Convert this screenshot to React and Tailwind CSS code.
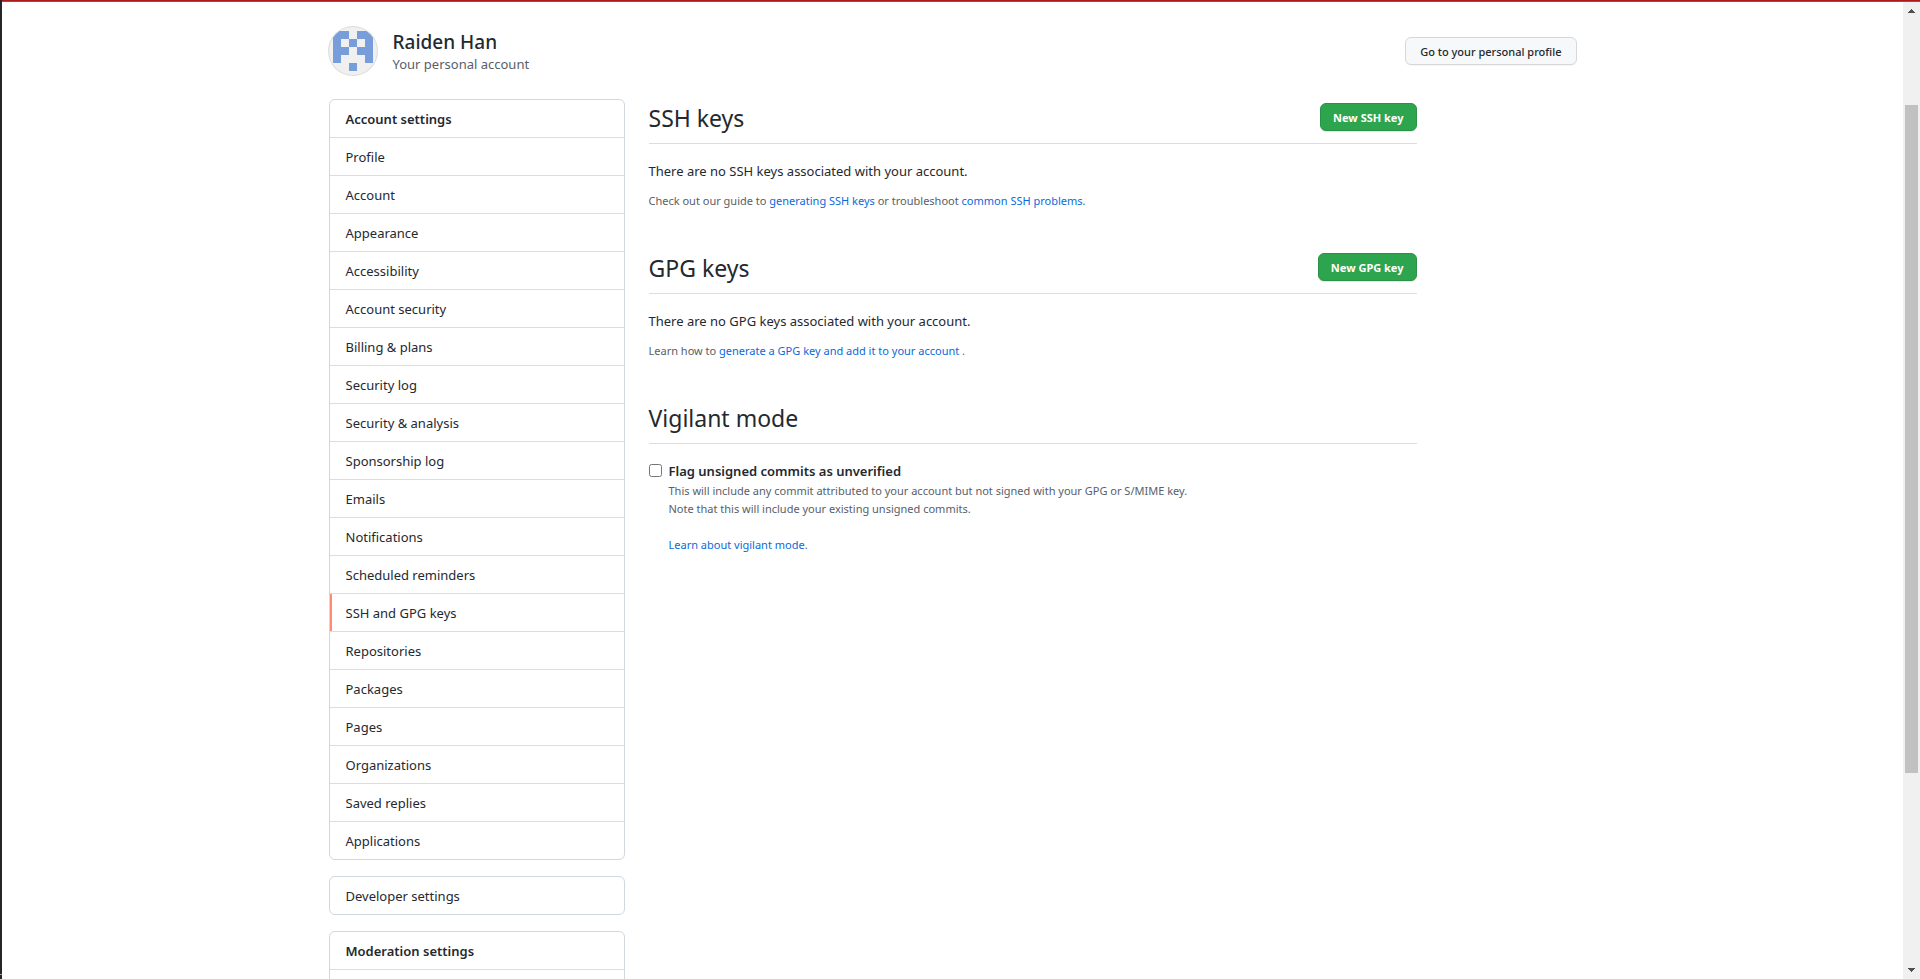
import React from "react";

const ACCOUNT_LINKS = [
  "Profile",
  "Account",
  "Appearance",
  "Accessibility",
  "Account security",
  "Billing & plans",
  "Security log",
  "Security & analysis",
  "Sponsorship log",
  "Emails",
  "Notifications",
  "Scheduled reminders",
  "SSH and GPG keys",
  "Repositories",
  "Packages",
  "Pages",
  "Organizations",
  "Saved replies",
  "Applications",
];

function Avatar() {
  return (
    <svg viewBox="0 0 50 50" className="-mx-px size-[50px] shrink-0" role="img" aria-label="Raiden Han">
      <defs>
        <clipPath id="avatar-circle">
          <circle cx="25" cy="25" r="24" />
        </clipPath>
      </defs>
      <circle cx="25" cy="25" r="25" fill="#dcdcdc" />
      <g clipPath="url(#avatar-circle)">
        <rect width="50" height="50" fill="#f0f0f0" />
        <g fill="#779ddb">
          <path d="M5 5h16v8h-8v8h8v8h-8v8H5z" />
          <path d="M45 5H29v8h8v8h-8v8h8v8h8z" />
          <rect x="21" y="13" width="8" height="8" />
          <rect x="21" y="37" width="8" height="8" />
        </g>
      </g>
    </svg>
  );
}

function Menu({ title, items = [], current, children }) {
  return (
    <nav
      aria-label={title || items[0]}
      className="divide-y divide-[#d8dee4] rounded-md border border-[#d0d7de] leading-[21px]"
    >
      {title && <h2 className="px-4 pt-[9px] pb-[7px] font-semibold">{title}</h2>}
      {items.map((item) => (
        <a
          key={item}
          href="#"
          aria-current={item === current ? "page" : undefined}
          className="block px-4 pt-[9px] pb-[7px] aria-[current=page]:shadow-[inset_2px_0_0_#fd8c73]"
        >
          {item}
        </a>
      ))}
      {children}
    </nav>
  );
}

function Section({ title, action, children }) {
  return (
    <section>
      <div className="flex items-start justify-between border-b border-[#d8dee4] pb-[7px]">
        <h2 className="pt-px text-[23px] leading-9">{title}</h2>
        {action && (
          <button
            type="button"
            className="mt-1 h-7 rounded-md border border-[#2a9147] bg-[#2da44e] px-3 pt-px text-[11px] leading-5 font-bold text-white shadow-[0_1px_0_rgba(27,31,36,0.1)]"
          >
            {action}
          </button>
        )}
      </div>
      <div className="pt-[17px]">{children}</div>
    </section>
  );
}

function Link({ children }) {
  return (
    <a href="#" className="text-[#0969da] hover:underline">
      {children}
    </a>
  );
}

function Scrollbar() {
  return (
    <div aria-hidden="true" className="flex w-[17px] shrink-0 flex-col items-center bg-[#f0f0f0]">
      <svg viewBox="0 0 17 17" className="size-[17px] shrink-0" fill="#505050" shapeRendering="crispEdges">
        <path d="M8 7h1v1h1v1h1v1h1v1H5v-1h1V9h1V8h1z" />
      </svg>
      <div className="flex w-full grow flex-col items-center">
        <div className="grow-[86]" />
        <div className="w-[13px] grow-[668] bg-[#c1c1c1]" />
        <div className="grow-[189]" />
      </div>
      <svg viewBox="0 0 17 17" className="size-[17px] shrink-0" fill="#505050" shapeRendering="crispEdges">
        <path d="M5 6h7v1h-1v1h-1v1H9v1H8V9H7V8H6V7H5z" />
      </svg>
    </div>
  );
}

export default function App() {
  return (
    <div className="flex h-screen overflow-hidden bg-white font-['Noto_Sans','Open_Sans',sans-serif] text-[13px] leading-[21px] text-[#24292f]">
      <div className="flex w-[2px] shrink-0 flex-col justify-end bg-[#252628] pb-1">
        <div className="h-px bg-[#a0a0a0]" />
      </div>
      <div className="flex min-w-0 grow flex-col">
        <div className="h-[2px] shrink-0 border-b border-[#c4383b] bg-[#ab1a1d]" />
        <div className="flex min-h-0 grow">
          <div className="min-w-0 grow overflow-hidden">
            <div className="mx-auto max-w-[1280px] px-4 pt-6">
              <header className="flex items-center justify-between pb-[23px]">
                <div className="flex items-center gap-4">
                  <Avatar />
                  <div className="pt-0.5">
                    <h1 className="text-[19px] leading-6 font-medium">Raiden Han</h1>
                    <p className="text-[#57606a]">Your personal account</p>
                  </div>
                </div>
                <a
                  href="#"
                  className="rounded-md border border-[#d5d8da] bg-[#f6f8fa] px-3.5 pt-1 pb-0.5 text-[11px] leading-5 font-medium shadow-[0_1px_0_rgba(27,31,36,0.04)]"
                >
                  Go to your personal profile
                </a>
              </header>

              <div className="flex gap-6">
                <div className="flex w-[296px] shrink-0 flex-col gap-4">
                  <Menu title="Account settings" items={ACCOUNT_LINKS} current="SSH and GPG keys" />
                  <Menu items={["Developer settings"]} />
                  <Menu title="Moderation settings">
                    <div className="h-9" />
                  </Menu>
                </div>

                <main className="flex max-w-[768px] min-w-0 grow flex-col gap-[39px]">
                  <Section title="SSH keys" action="New SSH key">
                    <p>There are no SSH keys associated with your account.</p>
                    <p className="mt-2.5 text-[11px] leading-[18px] text-[#57606a]">
                      Check out our guide to <Link>generating SSH keys</Link> or troubleshoot{" "}
                      <Link>common SSH problems</Link>.
                    </p>
                  </Section>

                  <Section title="GPG keys" action="New GPG key">
                    <p>There are no GPG keys associated with your account.</p>
                    <p className="mt-2.5 text-[11px] leading-[18px] text-[#57606a]">
                      Learn how to <Link>generate a GPG key and add it to your account</Link> .
                    </p>
                  </Section>

                  <Section title="Vigilant mode">
                    <div className="flex items-start gap-[7px]">
                      <input
                        id="vigilant"
                        type="checkbox"
                        aria-describedby="vigilant-note"
                        className="mt-[3px] size-[13px] shrink-0"
                      />
                      <div>
                        <label htmlFor="vigilant" className="block font-semibold">
                          Flag unsigned commits as unverified
                        </label>
                        <p id="vigilant-note" className="text-[11px] leading-[18px] text-[#57606a]">
                          This will include any commit attributed to your account but not signed with your GPG or
                          S/MIME key.
                          <br />
                          Note that this will include your existing unsigned commits.
                        </p>
                        <p className="mt-[18px] text-[11px] leading-[18px] text-[#57606a]">
                          <Link>Learn about vigilant mode</Link>.
                        </p>
                      </div>
                    </div>
                  </Section>
                </main>
              </div>
            </div>
          </div>
          <Scrollbar />
        </div>
      </div>
    </div>
  );
}
